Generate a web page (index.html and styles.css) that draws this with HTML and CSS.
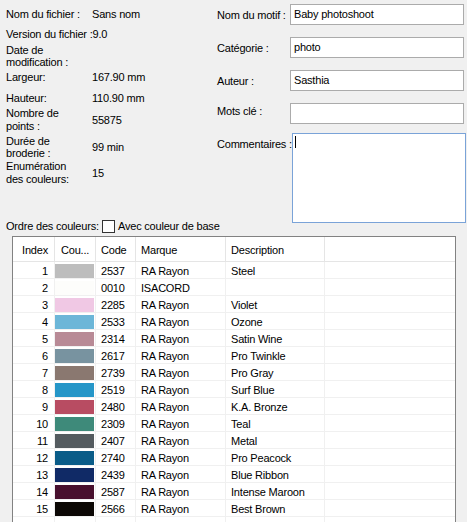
FILE: index.html
```html
<!DOCTYPE html>
<html lang="fr">
<head>
<meta charset="utf-8">
<title>Propriétés du motif</title>
<link rel="stylesheet" href="styles.css">
</head>
<body>
<div class="top">
  <div class="info">
    <div class="irow r1"><div class="lab">Nom du fichier :</div><div class="val">Sans nom</div></div>
    <div class="irow r2"><div class="lab">Version du fichier :</div><div class="val">9.0</div></div>
    <div class="irow r3 tight"><div class="lab">Date de<br>modification :</div><div class="val"></div></div>
    <div class="irow r4"><div class="lab">Largeur:</div><div class="val">167.90 mm</div></div>
    <div class="irow r5"><div class="lab">Hauteur:</div><div class="val">110.90 mm</div></div>
    <div class="irow r6"><div class="lab">Nombre de<br>points :</div><div class="val">55875</div></div>
    <div class="irow r7 tight"><div class="lab">Durée de<br>broderie :</div><div class="val">99 min</div></div>
    <div class="irow r8"><div class="lab">Enumération<br>des couleurs:</div><div class="val">15</div></div>
    <div class="order">
      <span class="order-lab">Ordre des couleurs:</span>
      <span class="check"></span>
      <span class="check-lab">Avec couleur de base</span>
    </div>
  </div>
  <div class="form">
    <div class="frow"><div class="flab">Nom du motif :</div><div class="field">Baby photoshoot</div></div>
    <div class="frow"><div class="flab">Catégorie :</div><div class="field">photo</div></div>
    <div class="frow"><div class="flab">Auteur :</div><div class="field">Sasthia</div></div>
    <div class="frow"><div class="flab mlab">Mots clé :</div><div class="field"></div></div>
    <div class="crow"><div class="flab clab">Commentaires :</div><div class="area"><span class="caret"></span></div></div>
  </div>
</div>
<div class="table">
  <div class="thead">
    <div class="th num">Index</div>
    <div class="th">Cou...</div>
    <div class="th">Code</div>
    <div class="th">Marque</div>
    <div class="th">Description</div>
    <div class="th last"></div>
  </div>
  <div class="trow"><div class="td num">1</div><div class="td sw"><span class="swatch" style="background:#bdbdbd"></span></div><div class="td">2537</div><div class="td">RA Rayon</div><div class="td">Steel</div><div class="td last"></div></div>
  <div class="trow"><div class="td num">2</div><div class="td sw"><span class="swatch" style="background:#fdfdfb"></span></div><div class="td">0010</div><div class="td">ISACORD</div><div class="td"></div><div class="td last"></div></div>
  <div class="trow"><div class="td num">3</div><div class="td sw"><span class="swatch" style="background:#f0c8e4"></span></div><div class="td">2285</div><div class="td">RA Rayon</div><div class="td">Violet</div><div class="td last"></div></div>
  <div class="trow"><div class="td num">4</div><div class="td sw"><span class="swatch" style="background:#6cb6d8"></span></div><div class="td">2533</div><div class="td">RA Rayon</div><div class="td">Ozone</div><div class="td last"></div></div>
  <div class="trow"><div class="td num">5</div><div class="td sw"><span class="swatch" style="background:#b88a96"></span></div><div class="td">2314</div><div class="td">RA Rayon</div><div class="td">Satin Wine</div><div class="td last"></div></div>
  <div class="trow"><div class="td num">6</div><div class="td sw"><span class="swatch" style="background:#7893a0"></span></div><div class="td">2617</div><div class="td">RA Rayon</div><div class="td">Pro Twinkle</div><div class="td last"></div></div>
  <div class="trow"><div class="td num">7</div><div class="td sw"><span class="swatch" style="background:#8a7870"></span></div><div class="td">2739</div><div class="td">RA Rayon</div><div class="td">Pro Gray</div><div class="td last"></div></div>
  <div class="trow"><div class="td num">8</div><div class="td sw"><span class="swatch" style="background:#2596c8"></span></div><div class="td">2519</div><div class="td">RA Rayon</div><div class="td">Surf Blue</div><div class="td last"></div></div>
  <div class="trow"><div class="td num">9</div><div class="td sw"><span class="swatch" style="background:#b84c62"></span></div><div class="td">2480</div><div class="td">RA Rayon</div><div class="td">K.A. Bronze</div><div class="td last"></div></div>
  <div class="trow"><div class="td num">10</div><div class="td sw"><span class="swatch" style="background:#3e8a7a"></span></div><div class="td">2309</div><div class="td">RA Rayon</div><div class="td">Teal</div><div class="td last"></div></div>
  <div class="trow"><div class="td num">11</div><div class="td sw"><span class="swatch" style="background:#545b5f"></span></div><div class="td">2407</div><div class="td">RA Rayon</div><div class="td">Metal</div><div class="td last"></div></div>
  <div class="trow"><div class="td num">12</div><div class="td sw"><span class="swatch" style="background:#0a5c88"></span></div><div class="td">2740</div><div class="td">RA Rayon</div><div class="td">Pro Peacock</div><div class="td last"></div></div>
  <div class="trow"><div class="td num">13</div><div class="td sw"><span class="swatch" style="background:#102a66"></span></div><div class="td">2439</div><div class="td">RA Rayon</div><div class="td">Blue Ribbon</div><div class="td last"></div></div>
  <div class="trow"><div class="td num">14</div><div class="td sw"><span class="swatch" style="background:#48102e"></span></div><div class="td">2587</div><div class="td">RA Rayon</div><div class="td">Intense Maroon</div><div class="td last"></div></div>
  <div class="trow"><div class="td num">15</div><div class="td sw"><span class="swatch" style="background:#0c0805"></span></div><div class="td">2566</div><div class="td">RA Rayon</div><div class="td">Best Brown</div><div class="td last"></div></div>
  <div class="tfill"><div class="td"></div><div class="td"></div><div class="td"></div><div class="td"></div><div class="td"></div><div class="td last"></div></div>
</div>
</body>
</html>
```

FILE: styles.css
```css
* { box-sizing: border-box; }
html, body {
  margin: 0;
  padding: 0;
  width: 467px;
  height: 522px;
  overflow: hidden;
  background: #f0f0f0;
  color: #000;
  font-family: "Liberation Sans", Arial, sans-serif;
  font-size: 11px;
  letter-spacing: -0.2px;
}

.top {
  display: grid;
  grid-template-columns: 217px 247px;
  align-items: start;
}

/* left information list */
.info {
  padding-top: 8px;
}
.irow {
  display: flex;
  align-items: center;
  padding-left: 6px;
  line-height: 13px;
}
.irow.tight { line-height: 12px; }
.lab {
  flex: 0 0 86px;
  white-space: nowrap;
}
.val { white-space: nowrap; }
.r2 { margin-top: 7px; }
.r3 { margin-top: 3px; }
.r4 { margin-top: 3px; }
.r5 { margin-top: 8px; }
.r6 { margin-top: 2px; }
.r7 { margin-top: 2px; }
.r8 { margin-top: 1px; }

.order {
  margin-top: 33px;
  height: 14px;
  display: flex;
  align-items: center;
  padding-left: 6px;
  white-space: nowrap;
}
.order-lab { flex: 0 0 96px; }
.check {
  width: 13px;
  height: 13px;
  background: #fff;
  border: 1px solid #333;
  flex: 0 0 13px;
}
.check-lab { margin-left: 3px; }

/* right form */
.form {
  padding-top: 4px;
}
.frow, .crow {
  display: flex;
}
.frow { align-items: center; }
.frow + .frow { margin-top: 12px; }
.crow { margin-top: 9px; align-items: flex-start; }
.flab {
  flex: 0 0 73px;
  white-space: nowrap;
}
.mlab { padding-bottom: 6px; }
.clab { padding-top: 5px; line-height: 13px; }
.field {
  flex: 0 0 174px;
  height: 21px;
  background: #fff;
  border: 1px solid #ababab;
  padding-left: 3px;
  line-height: 18px;
  white-space: nowrap;
}
.area {
  flex: 0 0 174px;
  height: 90px;
  background: #fff;
  border: 1px solid #7aa3d8;
}
.caret {
  display: block;
  width: 1px;
  height: 12px;
  margin-left: 2px;
  margin-top: 2px;
  background: #000;
}

/* color table */
.table {
  margin-top: 3px;
  margin-left: 12px;
  width: 444px;
  height: 300px;
  background: #fff;
  border: 1px solid #828282;
}
.thead, .trow, .tfill {
  display: grid;
  grid-template-columns: 42px 41px 40px 90px 99px 1fr;
}
.thead {
  height: 25px;
  border-bottom: 1px solid #e5e5e5;
}
.th {
  border-right: 1px solid #e5e5e5;
  padding: 2px 0 0 5px;
  line-height: 22px;
  white-space: nowrap;
}
.th:nth-child(2) { padding-left: 6px; }
.trow {
  height: 17px;
  border-bottom: 1px solid #f0f0f0;
}
.td {
  border-right: 1px solid #f0f0f0;
  padding: 2px 0 0 5px;
  line-height: 14px;
  white-space: nowrap;
}
.th.num, .td.num {
  text-align: right;
  padding-left: 0;
  padding-right: 6px;
}
.td.sw { padding: 0; }
.swatch {
  display: block;
  width: 39px;
  height: 14px;
  margin-top: 2px;
}
.last { border-right: none; }
.tfill { height: 60px; }
.tfill .td { height: 60px; }
```
